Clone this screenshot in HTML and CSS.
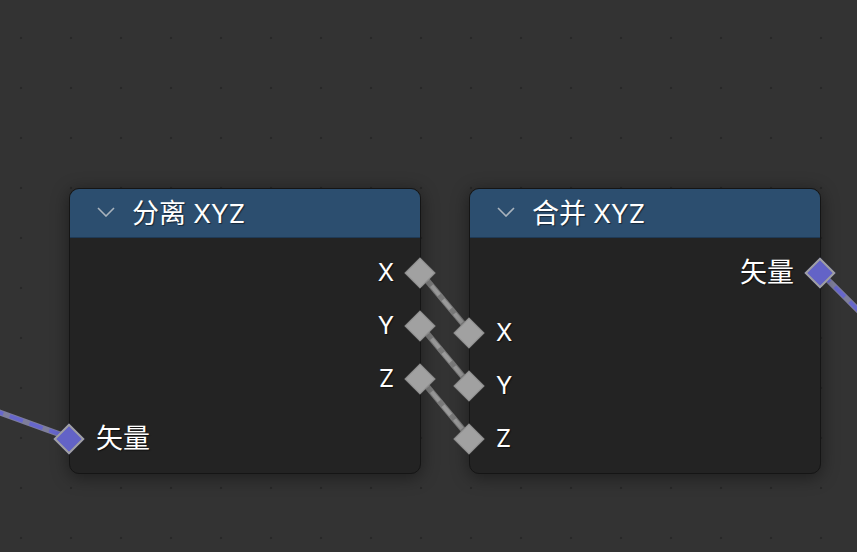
FILE: index.html
```html
<!DOCTYPE html>
<html lang="zh">
<head>
<meta charset="utf-8">
<title>Node Editor</title>
<link rel="stylesheet" href="styles.css">
</head>
<body>
<div class="canvas">
  <svg class="links" width="857" height="552" viewBox="0 0 857 552">
    <g class="link-gray">
      <line x1="420" y1="272" x2="470" y2="332"/>
      <line x1="420" y1="325" x2="470" y2="385"/>
      <line x1="420" y1="378" x2="470" y2="438"/>
    </g>
    <g class="link-gray-dash">
      <line x1="420" y1="272" x2="470" y2="332"/>
      <line x1="420" y1="325" x2="470" y2="385"/>
      <line x1="420" y1="378" x2="470" y2="438"/>
    </g>
    <g class="link-vec">
      <line x1="-10" y1="409" x2="70" y2="438"/>
      <line x1="820" y1="272" x2="870" y2="322"/>
    </g>
    <g class="link-vec-dash">
      <line x1="-10" y1="409" x2="70" y2="438"/>
      <line x1="820" y1="272" x2="870" y2="322"/>
    </g>
  </svg>

  <div class="node node-a">
    <div class="node-header">
      <svg class="chevron" width="18" height="10" viewBox="0 0 18 10"><path d="M1 1 L9 9 L17 1"/></svg>
      <span class="title"><span class="cjk">分离</span> XYZ</span>
    </div>
    <div class="node-body">
      <div class="row out"><span class="label">X</span><i class="socket"></i></div>
      <div class="row out"><span class="label">Y</span><i class="socket"></i></div>
      <div class="row out"><span class="label">Z</span><i class="socket"></i></div>
      <div class="row in spaced"><i class="socket vector"></i><span class="label cjk">矢量</span></div>
    </div>
  </div>

  <div class="node node-b">
    <div class="node-header">
      <svg class="chevron" width="18" height="10" viewBox="0 0 18 10"><path d="M1 1 L9 9 L17 1"/></svg>
      <span class="title"><span class="cjk">合并</span> XYZ</span>
    </div>
    <div class="node-body">
      <div class="row out"><span class="label cjk">矢量</span><i class="socket vector"></i></div>
      <div class="row in spaced"><i class="socket"></i><span class="label">X</span></div>
      <div class="row in"><i class="socket"></i><span class="label">Y</span></div>
      <div class="row in"><i class="socket"></i><span class="label">Z</span></div>
    </div>
  </div>
</div>
</body>
</html>
```

FILE: styles.css
```css
html, body {
  margin: 0;
  padding: 0;
  background: #333333;
}

.canvas {
  position: relative;
  width: 857px;
  height: 552px;
  overflow: hidden;
  background-color: #333333;
  background-image: radial-gradient(circle at center, #282828 0, #282828 1px, rgba(40,40,40,0) 1.6px);
  background-size: 50px 50px;
  background-position: -4px 13px;
  font-family: Inter, "Noto Sans CJK SC", sans-serif;
  color: #ffffff;
}

.links {
  position: absolute;
  left: 0;
  top: 0;
  z-index: 1;
}

.link-gray line {
  stroke: #7a7a7a;
  stroke-width: 6;
}
.link-gray-dash line {
  stroke: #9a9a9a;
  stroke-width: 4;
  stroke-dasharray: 12 6;
}
.link-vec line {
  stroke: #7e7e9c;
  stroke-width: 6;
}
.link-vec-dash line {
  stroke: #6767cc;
  stroke-width: 4;
  stroke-dasharray: 14 7;
}

.node {
  position: absolute;
  top: 188px;
  width: 352px;
  box-sizing: border-box;
  border: 1px solid #151515;
  border-radius: 10px;
  background: #232323;
  box-shadow: 0 3px 18px rgba(0, 0, 0, 0.45);
  z-index: 2;
}
.node-a { left: 69px; }
.node-b { left: 469px; }

.node-header {
  height: 48px;
  display: flex;
  align-items: center;
  padding-left: 27px;
  background: #2c4e6f;
  border-bottom: 1px solid #1f3a56;
  border-radius: 9px 9px 0 0;
}

.chevron {
  margin-right: 17px;
  margin-top: -3px;
}
.chevron path {
  fill: none;
  stroke: #a9b3bd;
  stroke-width: 1.6;
}

.title {
  font-size: 26px;
  line-height: 1;
  color: #ffffff;
  text-shadow: 1px 1px 1px rgba(0, 0, 0, 0.5);
}

.cjk {
  font-size: 27px;
}

.node-body {
  padding: 8px 0 8px;
  display: flex;
  flex-direction: column;
}

.row {
  position: relative;
  height: 53px;
  display: flex;
  align-items: center;
}
.row.spaced { margin-top: 7px; }
.row.out { justify-content: flex-end; padding-right: 26px; }
.row.in { justify-content: flex-start; padding-left: 26px; }

.label {
  font-size: 24px;
  line-height: 1;
  color: #ffffff;
  text-shadow: 1px 1px 1px rgba(0, 0, 0, 0.6);
}
.label.cjk {
  font-size: 27px;
}

.socket {
  position: absolute;
  top: 50%;
  width: 20px;
  height: 20px;
  margin-top: -11px;
  box-sizing: content-box;
  border: 1px solid #8a8a8a;
  background: #a1a1a1;
  transform: rotate(45deg);
  z-index: 3;
}
.row.out .socket { right: -11px; }
.row.in .socket { left: -12px; }

.socket.vector {
  width: 18px;
  height: 18px;
  margin-top: -11px;
  border: 2px solid #a0a0a0;
  background: #6363c7;
}
```
